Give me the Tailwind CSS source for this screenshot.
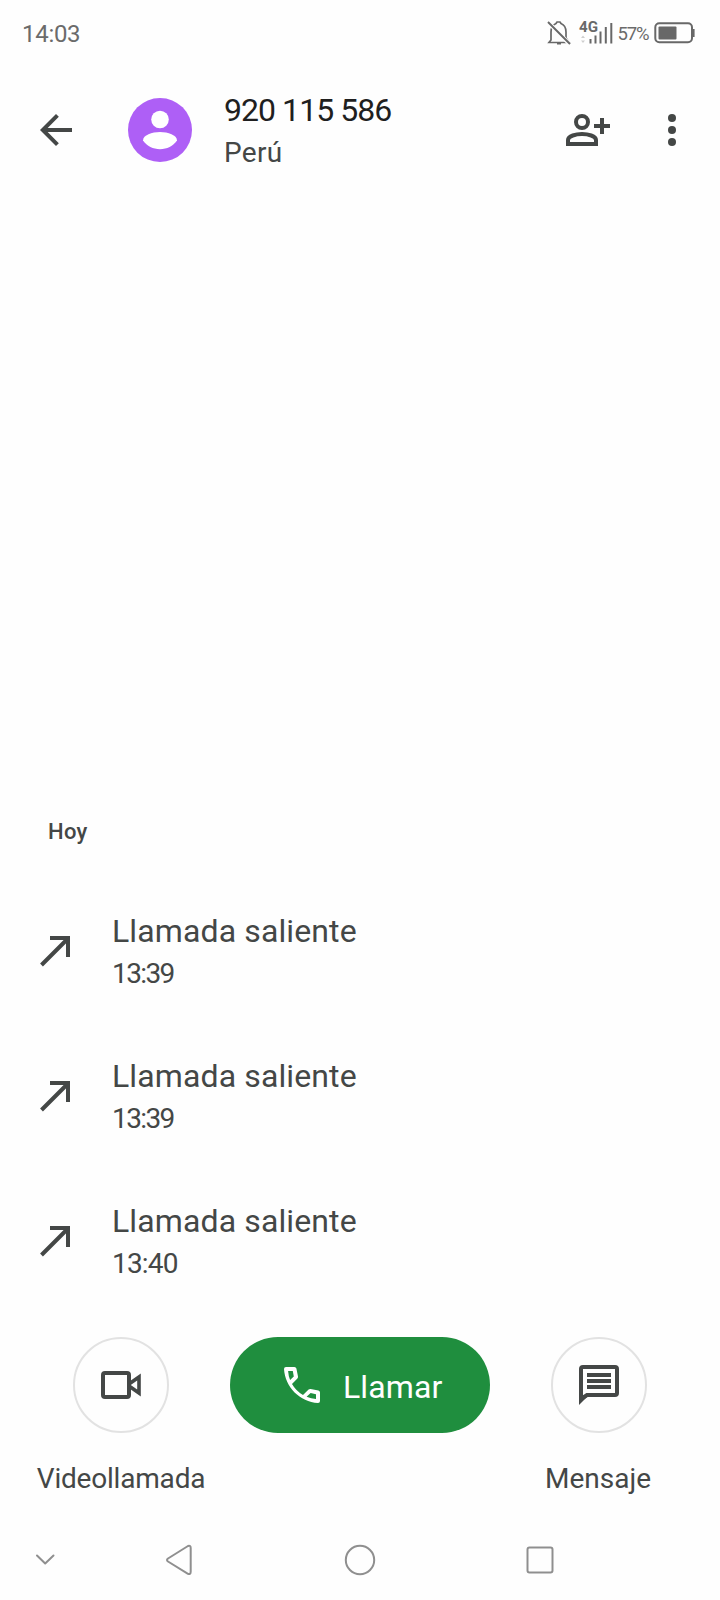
<!DOCTYPE html>
<html lang="es">
<head>
<meta charset="utf-8">
<title>Detalles de llamada</title>
<script src="https://cdn.jsdelivr.net/npm/@tailwindcss/browser@4"></script>
</head>
<body class="bg-[#fefefe]">
<div class="flex h-[1600px] w-[720px] flex-col overflow-hidden bg-[#fefefe] font-['Roboto',sans-serif] text-[#444746]">

  <!-- Status bar -->
  <header class="flex h-[68px] shrink-0 items-center text-[#6b6b6b]">
    <span class="ml-[22px] w-[500px] text-2xl tracking-[-0.3px]">14:03</span>
    <svg class="mt-[2px] ml-2 h-[50px] w-[190px]" viewBox="530 10 190 50" fill="none" stroke="#686868">
      <path d="M551 40V32Q551 25.500 556 23.500L557 22H560L561 23.500Q566 25.500 566 32V38L569 42.500H549Z" stroke-width="1.700"/>
      <path d="M548 22L569 43.500" stroke="#fefefe" stroke-width="4"/>
      <path d="M548 22L570 44M557 43.500H561" stroke-width="1.900"/>
      <text x="579" y="31.500" font-size="14" font-weight="700" fill="#686868" stroke="none" textLength="19" lengthAdjust="spacingAndGlyphs">4G</text>
      <path d="M581 38L583 35.500L585 38ZM581 40.500L583 43L585 40.500Z" fill="#cfcfcf" stroke="none"/>
      <path d="M590.500 39V43.500M595.500 35.500V43.500M600.500 31.500V43.500M605.800 27V43.500M611.300 23V43.500" stroke-width="2"/>
      <text x="617.500" y="40" font-size="18.500" fill="#6b6b6b" stroke="none" textLength="32">57%</text>
      <rect x="655.300" y="23.300" width="36.700" height="19" rx="4" stroke-width="2"/>
      <rect x="658.500" y="26.500" width="18" height="13" rx="1" fill="#686868" stroke="none"/>
      <path d="M693.300 29V37" stroke-width="2.600"/>
    </svg>
  </header>

  <!-- Contact header -->
  <section class="flex h-[124px] shrink-0 items-center">
    <svg class="ml-8 size-12" viewBox="0 0 24 24" fill="#444746"><path d="M20 11H7.830l5.590-5.590L12 4l-8 8 8 8 1.410-1.410L7.830 13H20v-2z"/></svg>
    <svg class="ml-12 size-16" viewBox="0 0 64 64"><circle cx="32" cy="32" r="32" fill="#ae5ff6"/><circle cx="32" cy="21.500" r="8.800" fill="#fff"/><path d="M15 42.500C15 37 24 34 32 34S49 37 49 42.500C45 48 39 51.200 32 51.200S19 48 15 42.500Z" fill="#fff"/></svg>
    <div class="mt-[3px] ml-8 w-[341px]">
      <h1 class="text-[32px] leading-[42px] font-normal tracking-[-0.95px] text-[#1f1f1f]">920 115 586</h1>
      <p class="text-[28px] leading-[43px] tracking-[0.3px]">Perú</p>
    </div>
    <svg class="-ml-px size-12" viewBox="0 0 48 48" fill="none" stroke="#444746" stroke-width="4"><circle cx="18" cy="16" r="6"/><path d="M4 38V34C4 30 12 28 18 28S32 30 32 34V38Z"/><path d="M30 20H46M38 12V28"/></svg>
    <svg class="ml-9 size-12" viewBox="0 0 48 48" fill="#444746"><circle cx="24" cy="12" r="4"/><circle cx="24" cy="24" r="4"/><circle cx="24" cy="36" r="4"/></svg>
  </section>

  <!-- Call history -->
  <main class="flex h-[1145px] shrink-0 flex-col justify-end pb-[24px]">
    <h2 class="mb-[30px] ml-12 h-8 text-[22px] leading-8 font-medium tracking-[0.3px]">Hoy</h2>
    <div class="flex h-[145px] items-center">
      <svg class="ml-8 size-12" viewBox="0 0 48 48" fill="none" stroke="#444746" stroke-width="4"><path d="M9.500 38L36 11.500M18 11H36V30"/></svg>
      <div class="mt-[4px] ml-8"><p class="text-[32px] leading-[42px] tracking-[0.12px]">Llamada saliente</p><p class="text-[28px] leading-[43px] tracking-[-1.6px]">13:39</p></div>
    </div>
    <div class="flex h-[145px] items-center">
      <svg class="ml-8 size-12" viewBox="0 0 48 48" fill="none" stroke="#444746" stroke-width="4"><path d="M9.500 38L36 11.500M18 11H36V30"/></svg>
      <div class="mt-[4px] ml-8"><p class="text-[32px] leading-[42px] tracking-[0.12px]">Llamada saliente</p><p class="text-[28px] leading-[43px] tracking-[-1.6px]">13:39</p></div>
    </div>
    <div class="flex h-[145px] items-center">
      <svg class="ml-8 size-12" viewBox="0 0 48 48" fill="none" stroke="#444746" stroke-width="4"><path d="M9.500 38L36 11.500M18 11H36V30"/></svg>
      <div class="mt-[4px] ml-8"><p class="text-[32px] leading-[42px] tracking-[0.12px]">Llamada saliente</p><p class="text-[28px] leading-[43px] tracking-[-0.8px]">13:40</p></div>
    </div>
  </main>

  <!-- Actions -->
  <section class="flex h-[183px] shrink-0">
    <button class="flex w-[230px] flex-col items-center">
      <span class="mr-[-12px] flex size-24 items-center justify-center rounded-full border-2 border-[#e2e2e2]">
        <svg class="size-12" viewBox="0 0 48 48" fill="none" stroke="#444746" stroke-width="4"><rect x="6" y="12" width="26" height="24" rx="2"/><path d="M32 23L42 16V32L32 25" stroke-width="3.600"/></svg>
      </span>
      <span class="mr-[-12px] mt-[25px] text-[28px] leading-[42px] tracking-[-0.2px]">Videollamada</span>
    </button>
    <button class="flex h-24 w-[260px] items-center rounded-full bg-[#1f8e3e] pl-12 text-white">
      <svg class="size-12" viewBox="0 0 24 24" fill="#fff" fill-rule="evenodd"><path d="M4 3H8.200Q9 3 9.200 3.800L10 7.800Q10.100 8.400 9.700 8.800L7 11.500Q9 15 12.500 17L15.300 14.300Q15.700 13.900 16.300 14L20.200 14.800Q21 15 21 15.800V20Q21 21 20 21C11 20.500 3.500 13 3 4Q3 3 4 3ZM5.050 5Q5.200 7.300 6.050 9.500L7.900 7.700L7.400 5ZM14.300 17.900Q16.500 18.800 19 19V16.600L16.300 16Z"/></svg>
      <span class="mt-[3px] ml-[17px] text-[32px] leading-[42px] tracking-[0.1px]">Llamar</span>
    </button>
    <button class="flex w-[218px] flex-col items-center">
      <span class="flex size-24 items-center justify-center rounded-full border-2 border-[#e2e2e2]">
        <svg class="size-12" viewBox="0 0 48 48" fill="none" stroke="#444746" stroke-width="4"><path d="M6 8V38L12 34H40Q42 34 42 32V8Q42 6 40 6H8Q6 6 6 8Z"/><path d="M4 34V44L14 34Z" fill="#444746" stroke="none"/><path d="M12 14H36M12 20H36M12 26H36"/></svg>
      </span>
      <span class="mt-[25px] mr-[2px] text-[28px] leading-[42px]">Mensaje</span>
    </button>
  </section>

  <!-- Navigation bar -->
  <nav class="h-20 shrink-0">
    <svg class="h-20 w-[720px]" viewBox="0 1520 720 80" fill="none" stroke="#8f8f8f" stroke-width="2" stroke-linecap="round" stroke-linejoin="round"><path d="M37 1555.500L45.200 1563.500L53.500 1555.500"/><path d="M168 1558.500L188 1546Q190.700 1545 190.700 1548V1571.500Q190.700 1575 188 1573.800L168 1561.500Q166 1560 168 1558.500Z"/><circle cx="360" cy="1560" r="14.200"/><rect x="527.500" y="1547.500" width="25" height="25" rx="2"/></svg>
  </nav>
</div>
</body>
</html>
